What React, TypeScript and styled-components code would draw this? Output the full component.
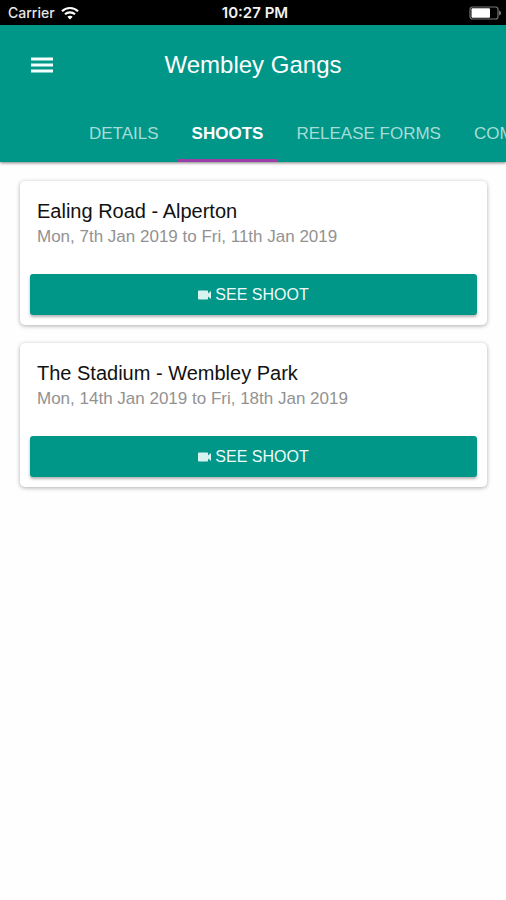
import React from "react";
import styled, { createGlobalStyle } from "styled-components";

const TEAL = "#009688";

const GlobalStyle = createGlobalStyle`
  * { box-sizing: border-box; }
  body {
    margin: 0;
    background: #fefefe;
    font-family: "Liberation Sans", Arial, sans-serif;
  }
  button { font-family: inherit; }
`;

const Screen = styled.div`
  min-height: 100vh;
  overflow: hidden;
`;

const StatusBar = styled.div`
  display: grid;
  grid-template-columns: 1fr auto 1fr;
  align-items: center;
  height: 25px;
  padding: 1px 4px 0 8px;
  background: #000;
  color: #e6e6e6;
  font: 500 14px/16px Inter, sans-serif;
`;

const Carrier = styled.div`
  display: flex;
  align-items: center;
  gap: 6px;
`;

const Clock = styled.div`
  font-size: 15px;
  font-weight: 600;
  color: #f2f2f2;
`;

const BatteryIcon = styled.svg`
  justify-self: end;
`;

const Header = styled.header`
  background: ${TEAL};
  color: #fff;
  box-shadow: 0 1px 3px rgba(0, 0, 0, 0.5);
`;

const TitleBar = styled.div`
  display: grid;
  grid-template-columns: 1fr auto 1fr;
  align-items: center;
  height: 80px;
  padding: 0 27px;
`;

const MenuButton = styled.button`
  display: flex;
  justify-self: start;
  padding: 4px;
  border: 0;
  background: none;
  color: #fff;
  cursor: pointer;
`;

const Title = styled.h1`
  margin: 0;
  font-size: 24px;
  line-height: 28px;
  font-weight: 400;
`;

const Tabs = styled.nav`
  display: flex;
  gap: 3px;
  padding-left: 74px;
  overflow-x: auto;
  scrollbar-width: none;
`;

const Tab = styled.button<{ $active?: boolean }>`
  flex: none;
  height: 57px;
  padding: 3px 15px 0;
  border: 0;
  border-bottom: 3px solid ${({ $active }) => ($active ? "#9a3fa8" : "transparent")};
  background: none;
  color: ${({ $active }) => ($active ? "#fff" : "#a6ddd7")};
  font-size: 17px;
  line-height: 20px;
  font-weight: ${({ $active }) => ($active ? 700 : 400)};
  cursor: pointer;
`;

const ShootList = styled.main`
  display: flex;
  flex-direction: column;
  gap: 18px;
  padding: 19px 19px 20px 20px;
`;

const Card = styled.article`
  padding: 17px 10px 10px;
  border-radius: 5px;
  background: #fff;
  box-shadow: 0 1px 4px rgba(0, 0, 0, 0.32);
`;

const CardText = styled.div`
  padding: 0 7px 24px;
`;

const Place = styled.h2`
  margin: 0;
  color: #111;
  font-size: 20px;
  line-height: 26px;
  font-weight: 400;
`;

const Dates = styled.p`
  margin: 0;
  color: #929292;
  font-size: 17px;
  line-height: 26px;
`;

const ShootButton = styled.button`
  display: flex;
  align-items: center;
  justify-content: center;
  gap: 4px;
  width: 100%;
  height: 41px;
  padding: 0;
  border: 0;
  border-radius: 3px;
  background: ${TEAL};
  color: #eefaf8;
  font-size: 16px;
  line-height: 20px;
  box-shadow: 0 2px 3px rgba(0, 0, 0, 0.3);
  cursor: pointer;
`;

const tabs = ["DETAILS", "SHOOTS", "RELEASE FORMS", "COMMENTS"];

const shoots = [
  { place: "Ealing Road - Alperton", dates: "Mon, 7th Jan 2019 to Fri, 11th Jan 2019" },
  { place: "The Stadium - Wembley Park", dates: "Mon, 14th Jan 2019 to Fri, 18th Jan 2019" },
];

const Wifi = () => (
  <svg width="18" height="14" viewBox="0 0 18 14" fill="none" stroke="#fff" strokeWidth="2.2" aria-hidden="true">
    <path d="M1 5.2C5.4.9 12.6.9 17 5.2" />
    <path d="M4 8.3c2.8-2.7 7.2-2.7 10 0" />
    <path d="M9 13.5 6.3 10.8c1.5-1.4 3.9-1.4 5.4 0Z" fill="#fff" stroke="none" />
  </svg>
);

const Battery = () => (
  <BatteryIcon width="33" height="14" viewBox="0 0 33 14" aria-hidden="true">
    <rect x="1" y="1" width="28" height="12" rx="2.5" fill="none" stroke="#777" strokeWidth="1.2" />
    <rect x="2.5" y="2.3" width="18.5" height="9.4" rx="1" fill="#fff" />
    <path d="M30 4.5c2.8.7 2.8 4.3 0 5Z" fill="#777" />
  </BatteryIcon>
);

const Menu = () => (
  <svg width="22" height="16" viewBox="0 0 22 16" fill="#f2fffd" aria-hidden="true">
    <path d="M0 0.5h22v3H0zM0 6.5h22v3H0zM0 12.5h22v3H0z" />
  </svg>
);

const Camera = () => (
  <svg width="13" height="10" viewBox="0 0 13 10" fill="#d8f3ef" aria-hidden="true">
    <path d="M1 .4h8.1q1 0 1 1v2.1L13 1v8l-2.9-2.5v2.1q0 1-1 1H1q-1 0-1-1V1.4q0-1 1-1Z" />
  </svg>
);

export default function App() {
  return (
    <Screen>
      <GlobalStyle />
      <StatusBar>
        <Carrier>
          Carrier
          <Wifi />
        </Carrier>
        <Clock>10:27 PM</Clock>
        <Battery />
      </StatusBar>
      <Header>
        <TitleBar>
          <MenuButton aria-label="Open menu">
            <Menu />
          </MenuButton>
          <Title>Wembley Gangs</Title>
        </TitleBar>
        <Tabs>
          {tabs.map((name) => (
            <Tab key={name} $active={name === "SHOOTS"}>
              {name}
            </Tab>
          ))}
        </Tabs>
      </Header>
      <ShootList>
        {shoots.map(({ place, dates }) => (
          <Card key={place}>
            <CardText>
              <Place>{place}</Place>
              <Dates>{dates}</Dates>
            </CardText>
            <ShootButton>
              <Camera />
              SEE SHOOT
            </ShootButton>
          </Card>
        ))}
      </ShootList>
    </Screen>
  );
}
